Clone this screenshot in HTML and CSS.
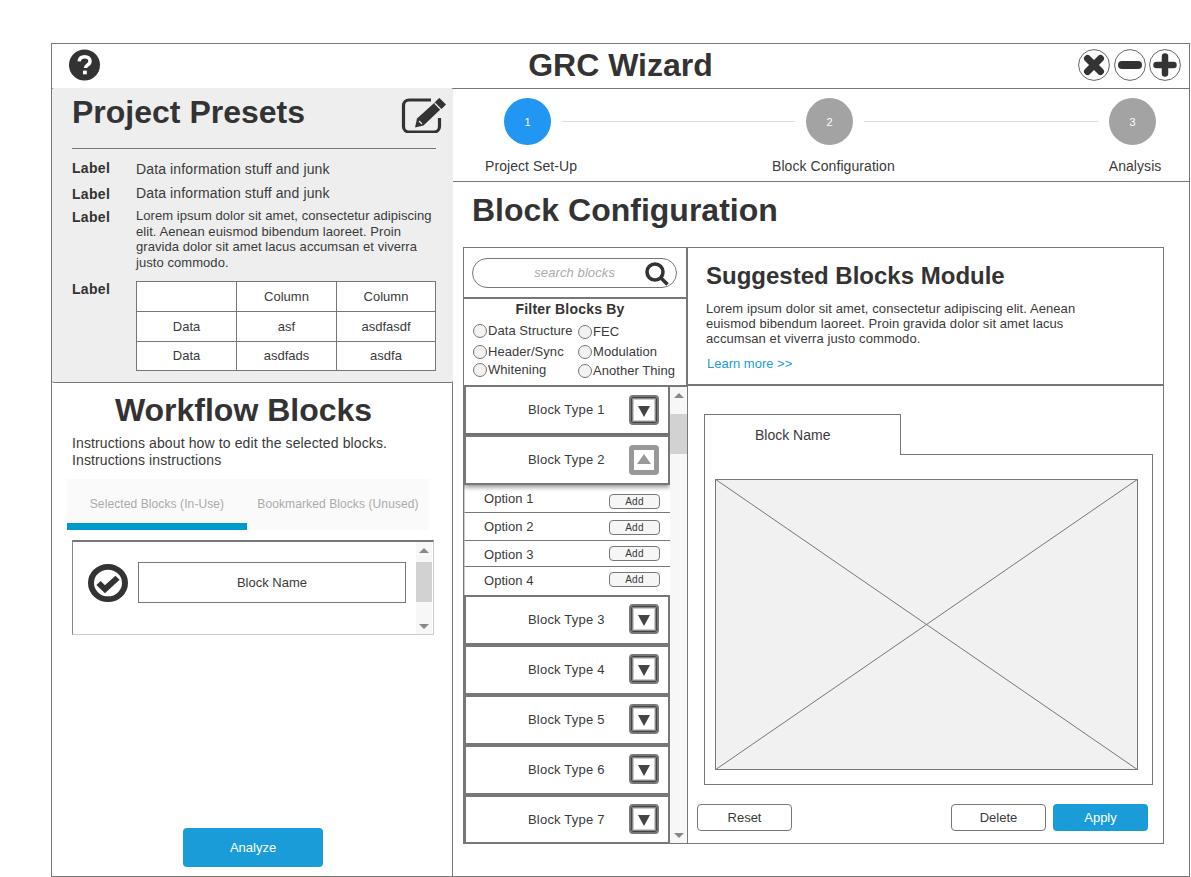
FILE: index.html
```html
<!DOCTYPE html>
<html lang="en">
<head>
<meta charset="utf-8">
<title>GRC Wizard</title>
<link rel="stylesheet" href="styles.css">
</head>
<body>
<div class="app">
  <header class="titlebar">
    <svg class="help" viewBox="0 0 32 32"><circle cx="16" cy="16" r="16" fill="#333"/><path d="M10.500 12.200c.3-3 2.600-4.700 5.700-4.700 3.200 0 5.500 1.800 5.500 4.500 0 2-1.200 3.100-2.700 4.100-1.300.9-1.900 1.500-1.900 3" fill="none" stroke="#fff" stroke-width="3.600"/><rect x="14.400" y="21.800" width="4" height="3.800" fill="#fff"/></svg>
    <h1 class="app-title">GRC Wizard</h1>
    <div class="win-btns">
      <svg class="win" viewBox="0 0 32 32"><circle cx="16" cy="16" r="15.400" fill="#fff" stroke="#666"/><path d="M9.500 9.500l13 13M22.500 9.500l-13 13" stroke="#333" stroke-width="7" stroke-linecap="round"/></svg>
      <svg class="win" viewBox="0 0 32 32"><circle cx="16" cy="16" r="15.400" fill="#fff" stroke="#666"/><path d="M8 16h16" stroke="#333" stroke-width="8" stroke-linecap="round"/></svg>
      <svg class="win" viewBox="0 0 32 32"><circle cx="16" cy="16" r="15.400" fill="#fff" stroke="#666"/><path d="M7.500 16h17M16 7.500v17" stroke="#333" stroke-width="6.500" stroke-linecap="round"/></svg>
    </div>
  </header>
  <div class="main">
    <aside class="left">
      <section class="presets">
        <div class="presets-head">
          <h2 class="presets-title">Project Presets</h2>
          <svg class="edit" viewBox="0 0 46 36"><path d="M30 3H8a5.500 5.500 0 0 0-5.500 5.500v21A5.500 5.500 0 0 0 8 35h25a5.500 5.500 0 0 0 5.500-5.500V21" fill="none" stroke="#333" stroke-width="3.200"/><path d="M16 21.500L36.500 3l6 6.500L22.500 28.500l-8.500 2z" fill="#333"/><path d="M34 5.500l2.500-3 2-1.500 6.500 6.500-2 2-2.500 2.500z" fill="#333"/><path d="M33.800 6.200l6.600 6.800" stroke="#eee" stroke-width="1.300"/><path d="M18 24l3 3" stroke="#eee" stroke-width="1.300"/></svg>
        </div>
        <div class="prop one"><b class="prop-label">Label</b><span class="prop-value">Data information stuff and junk</span></div>
        <div class="prop two"><b class="prop-label">Label</b><span class="prop-value">Data information stuff and junk</span></div>
        <div class="prop three"><b class="prop-label">Label</b><p class="prop-text">Lorem ipsum dolor sit amet, consectetur adipiscing elit. Aenean euismod bibendum laoreet. Proin gravida dolor sit amet lacus accumsan et viverra justo commodo.</p></div>
        <div class="prop four"><b class="prop-label">Label</b>
          <table class="data">
            <tr><td></td><td>Column</td><td>Column</td></tr>
            <tr><td>Data</td><td>asf</td><td>asdfasdf</td></tr>
            <tr><td>Data</td><td>asdfads</td><td>asdfa</td></tr>
          </table>
        </div>
      </section>
      <section class="workflow">
        <h2 class="workflow-title">Workflow Blocks</h2>
        <p class="workflow-text">Instructions about how to edit the selected blocks.<br>Instructions instructions</p>
        <div class="tabs">
          <div class="tab active">Selected Blocks (In-Use)</div>
          <div class="tab">Bookmarked Blocks (Unused)</div>
        </div>
        <div class="selected">
          <div class="selected-row">
            <svg class="check" viewBox="0 0 40 40" preserveAspectRatio="none"><circle cx="20" cy="20" r="17" fill="#fff" stroke="#333" stroke-width="6"/><path d="M10.500 20l6.500 6.500 12.500-12" fill="none" stroke="#333" stroke-width="6"/></svg>
            <div class="block-name">Block Name</div>
          </div>
          <div class="scrollbar">
            <i class="arrow-up"></i>
            <i class="thumb"></i>
            <i class="arrow-down"></i>
          </div>
        </div>
        <div class="analyze-wrap"><button class="btn primary analyze">Analyze</button></div>
      </section>
    </aside>
    <main class="right">
      <div class="steps">
        <div class="track">
          <span class="dot current">1</span><span class="connector"></span>
          <span class="dot">2</span><span class="connector"></span>
          <span class="dot">3</span>
        </div>
        <div class="step-labels">
          <span class="s1">Project Set-Up</span>
          <span class="s2">Block Configuration</span>
          <span class="s3">Analysis</span>
        </div>
      </div>
      <h2 class="page-title">Block Configuration</h2>
      <div class="config">
        <div class="sidebar">
          <div class="search-box">
            <div class="search">
              <span class="search-text">search blocks</span>
              <svg class="search-icon" viewBox="0 0 24 24"><circle cx="10" cy="10" r="8" fill="none" stroke="#333" stroke-width="3.600"/><path d="M15.500 15.500l7 7" stroke="#333" stroke-width="3.600"/></svg>
            </div>
          </div>
          <div class="filter">
            <h3 class="filter-title">Filter Blocks By</h3>
            <div class="filter-cols">
              <div class="filter-col">
                <label class="radio"><i></i>Data Structure</label>
                <label class="radio"><i></i>Header/Sync</label>
                <label class="radio"><i></i>Whitening</label>
              </div>
              <div class="filter-col second">
                <label class="radio"><i></i>FEC</label>
                <label class="radio"><i></i>Modulation</label>
                <label class="radio"><i></i>Another Thing</label>
              </div>
            </div>
          </div>
          <div class="list">
            <div class="items">
              <div class="item"><span>Block Type 1</span><i class="toggle"></i></div>
              <div class="item open"><span>Block Type 2</span><i class="toggle"></i></div>
              <div class="option"><span>Option 1</span><button class="add">Add</button></div>
              <div class="option"><span>Option 2</span><button class="add">Add</button></div>
              <div class="option"><span>Option 3</span><button class="add">Add</button></div>
              <div class="option"><span>Option 4</span><button class="add">Add</button></div>
              <div class="item"><span>Block Type 3</span><i class="toggle"></i></div>
              <div class="item"><span>Block Type 4</span><i class="toggle"></i></div>
              <div class="item"><span>Block Type 5</span><i class="toggle"></i></div>
              <div class="item"><span>Block Type 6</span><i class="toggle"></i></div>
              <div class="item"><span>Block Type 7</span><i class="toggle"></i></div>
            </div>
            <div class="scrollbar tall">
              <i class="arrow-up"></i>
              <i class="thumb"></i>
              <i class="arrow-down"></i>
            </div>
          </div>
        </div>
        <div class="content">
          <div class="suggest">
            <h2 class="suggest-title">Suggested Blocks Module</h2>
            <p class="suggest-text">Lorem ipsum dolor sit amet, consectetur adipiscing elit. Aenean euismod bibendum laoreet. Proin gravida dolor sit amet lacus accumsan et viverra justo commodo.</p>
            <a class="learn">Learn more &gt;&gt;</a>
          </div>
          <div class="editor">
            <div class="tab-head"><div class="tab-label">Block Name</div></div>
            <div class="tab-body">
              <svg class="placeholder" viewBox="0 0 423 291" preserveAspectRatio="none"><rect x=".5" y=".5" width="422" height="290" fill="#f1f1f1" stroke="#777"/><path d="M0 0L423 291M423 0L0 291" stroke="#777"/></svg>
            </div>
            <div class="actions">
              <button class="btn">Reset</button>
              <span class="spacer"></span>
              <button class="btn">Delete</button>
              <button class="btn primary">Apply</button>
            </div>
          </div>
        </div>
      </div>
    </main>
  </div>
</div>
</body>
</html>
```
FILE: styles.css
```css
* { box-sizing: border-box; }
html, body { margin: 0; padding: 0; height: 877px; overflow: hidden; background: #fff; }
body { font-family: "Liberation Sans", Arial, sans-serif; font-size: 14px; color: #3a3a3a; }
h1, h2, h3, p { margin: 0; }
h1, h2, h3, b { color: #333; }
i { display: block; font-style: normal; }

.app { margin: 43px 0 0 51px; width: 1139px; height: 834px; border: 1px solid #777; display: flex; flex-direction: column; }

.titlebar { height: 45px; flex: none; border-bottom: 1px solid #777; display: flex; align-items: center; justify-content: space-between; padding: 0 9px 2px 17px; position: relative; }
.help { width: 31px; height: 32px; }
.app-title { font-size: 32px; font-weight: bold; line-height: 40px; position: absolute; left: 0; right: 0; text-align: center; pointer-events: none; }
.win-btns { display: flex; gap: 4.500px; margin-right: -1px; }
.win { width: 32px; height: 32px; margin-left: -1px; }

.main { flex: 1; display: flex; min-height: 0; }

.left { width: 401px; flex: none; border-right: 1px solid #777; display: flex; flex-direction: column; }
.presets { height: 295px; flex: none; margin: -1px -1px 0 0; background: #eee; border-radius: 2px; padding: 0 17px 0 20px; border-bottom: 1px solid #777; position: relative; }
.presets-head { height: 61px; border-bottom: 1px solid #777; display: flex; justify-content: space-between; align-items: flex-start; }
.presets-title { font-size: 32px; line-height: 48px; }
.edit { width: 46px; height: 36px; margin: 9px -11px 0 0; }
.prop { display: flex; }
.prop-label { width: 64px; flex: none; letter-spacing: .3px; }
.prop-value { letter-spacing: .13px; }
.prop.one { margin-top: 12px; height: 24px; line-height: 17px; }
.prop.one .prop-label { margin-top: -1px; }
.prop.two { height: 23px; line-height: 17px; }
.prop.two .prop-label { margin-top: 1px; }
.prop.three { line-height: 17px; }
.prop.three .prop-label { margin-top: 1px; }
.prop-text { font-size: 13px; line-height: 15.670px; width: 300px; letter-spacing: .06px; }
.prop.four { margin-top: 8px; line-height: 17px; }
.prop.four .prop-label { margin-top: 2px; }
.data { flex: none; border-collapse: collapse; background: #fff; margin-top: 2px; }
.data td { width: 100px; height: 30px; border: 1px solid #777; text-align: center; font-size: 13px; padding: 0; }
.data td:last-child { width: 99px; }
.data tr:last-child td { height: 29px; }

.workflow { flex: 1; display: flex; flex-direction: column; padding: 0 0 9px 20px; }
.workflow-title { font-size: 32px; line-height: 40px; text-align: center; margin: 7px 18px 0 -19px; }
.workflow-text { line-height: 17px; margin-top: 5px; letter-spacing: .12px; }
.tabs { display: flex; width: 362px; height: 51px; margin: 10px 0 0 -5px; background: #fafafa; font-size: 12px; color: #aaa; letter-spacing: .1px; }
.tab { width: 180px; flex: none; text-align: center; padding: 18px 0 0 2px; line-height: 14px; white-space: nowrap; }
.tab.active { border-bottom: 7px solid #0099cc; padding-left: 0; }
.selected { width: 362px; height: 95px; margin-top: 10px; border: 1px solid #ccc; border-top: 2px solid #777; border-left-color: #888; display: flex; justify-content: space-between; }
.selected-row { display: flex; align-items: center; gap: 10px; padding: 19px 0 0 15px; height: 62px; }
.check { width: 40px; height: 38px; }
.block-name { width: 268px; height: 41px; border: 1px solid #777; display: flex; align-items: center; justify-content: center; font-size: 13px; }
.scrollbar { width: 16px; margin-right: 1px; background: #f7f7f7; display: flex; flex-direction: column; align-items: center; position: relative; }
.thumb { width: 16px; height: 40px; background: #d2d2d2; margin-top: 9px; }
.arrow-up { width: 0; height: 0; margin-top: 6px; border: 5px solid transparent; border-top: 0; border-bottom: 5px solid #888; }
.arrow-down { width: 0; height: 0; margin-top: auto; margin-bottom: 5px; border: 5px solid transparent; border-bottom: 0; border-top: 5px solid #888; }
.analyze-wrap { margin-top: auto; padding-left: 111px; }
.btn { width: 95px; height: 27px; border: 1px solid #777; border-radius: 4px; background: #fff; color: #3a3a3a; font: 13px "Liberation Sans", Arial, sans-serif; padding: 0; }
.btn.primary { border: 0; background: #1a9cd8; color: #fff; }
.btn.analyze { width: 140px; height: 39px; background: #1a9cd8; }

.right { flex: 1; min-width: 0; display: flex; flex-direction: column; }
.steps { height: 93px; flex: none; border-bottom: 1px solid #777; padding-top: 9px; }
.track { display: flex; align-items: center; padding: 0 33px 0 51px; }
.dot { width: 47px; height: 47px; flex: none; border-radius: 50%; background: #a3a3a3; color: #fff; font-size: 11px; display: flex; align-items: center; justify-content: center; }
.dot.current { background: #2196f3; }
.connector { flex: 1; height: 1px; background: #ddd; margin: 0 11px; }
.connector:nth-child(2) { flex: none; width: 233px; }
.step-labels { display: flex; margin-top: 13px; line-height: 17px; letter-spacing: .07px; }
.s1 { margin-left: 32px; }
.s2 { margin-left: 195px; }
.s3 { margin-left: 214px; }
.page-title { height: 65px; flex: none; padding-left: 19px; font-size: 32px; line-height: 56px; }

.config { margin-left: 10px; width: 701px; height: 597px; display: flex; border: 1px solid #777; flex: none; }
.sidebar { width: 224px; flex: none; display: flex; flex-direction: column; }
.search-box { height: 51px; border-bottom: 2px solid #777; padding: 10px 0 0 8px; flex: none; }
.search { width: 205px; height: 30px; border: 1px solid #777; border-radius: 15px; display: flex; align-items: center; justify-content: flex-end; padding-right: 7px; }
.search-text { font-size: 13px; font-style: italic; color: #aaa; margin: 0 30px 2px 0; letter-spacing: .1px; }
.search-icon { width: 24px; height: 24px; margin: 0 0 -1px 0; }
.filter { height: 86px; flex: none; padding: 2px 0 0 9px; font-size: 13px; }
.filter-title { font-size: 14px; line-height: 17px; text-align: center; margin-left: -9px; padding-right: 12px; letter-spacing: .2px; }
.filter-cols { display: flex; margin-top: 3px; }
.filter-col { width: 105px; }
.filter-col.second { margin-top: 1px; }
.radio { display: flex; align-items: center; height: 19px; gap: 1px; white-space: nowrap; letter-spacing: .05px; }
.radio:nth-child(2) { margin-top: 2px; }
.radio:nth-child(3) { margin-top: -1px; }
.filter-col.second .radio:nth-child(2) { margin-top: 1px; }
.filter-col.second .radio:nth-child(3) { margin-top: 0; }
.radio i { width: 14px; height: 14px; border: 1px solid #777; border-radius: 50%; background: #f2f2f2; }

.list { flex: 1; min-height: 0; display: flex; border-top: 2px solid #777; overflow: hidden; }
.items { width: 206px; flex: none; }
.item { height: 50px; border: 2px solid #777; display: flex; align-items: center; justify-content: space-between; padding-left: 62px; padding-right: 9px; background: #fff; position: relative; }
.item span { font-size: 13px; letter-spacing: .2px; margin-top: -1px; }
.option ~ .item span { margin-top: -2px; }
.item:nth-child(1) { height: 48px; border-top: 0; }
.item:last-child { height: 49px; padding-top: 1px; }
.option ~ .item .toggle { margin-top: -2px; }
.item.open { box-shadow: 0 2px 5px rgba(0,0,0,.45); }
.toggle { width: 30px; height: 30px; border: 2px solid #777; border-radius: 4px; box-shadow: inset 0 0 0 1px #444, inset 0 0 0 2px #888, inset 0 0 0 3px #ccc; background: #fff; display: flex; align-items: center; justify-content: center; position: relative; }
.toggle::after { content: ""; display: block; margin-top: 2px; border-left: 6px solid transparent; border-right: 6px solid transparent; border-top: 11px solid #444; }
.open .toggle { border: 5px solid #999; box-shadow: none; }
.open .toggle::after { margin: -2px 0 0; border-left-width: 7px; border-right-width: 7px; border-top: 0; border-bottom: 10px solid #999; }
.option { height: 28px; border-bottom: 1px solid #777; border-left: 1px solid #ccc; display: flex; align-items: flex-start; justify-content: space-between; padding: 6px 10px 0 19px; font-size: 13px; line-height: 16px; letter-spacing: .05px; }
.option:nth-child(3) .add { margin-top: 3px; }
.option:nth-child(4) .add { margin-top: 1px; }
.option:nth-child(5) { height: 26px; }
.option:nth-child(5) .add { margin-top: -1px; }
.option:nth-child(6) { border-bottom: 0; }
.option:nth-child(6) .add { margin-top: -1px; }
.add { width: 51px; height: 15px; border: 1px solid #777; border-radius: 4px; background: #f6f6f6; color: #3a3a3a; font: 10px "Liberation Sans", Arial, sans-serif; padding: 0; letter-spacing: .3px; }
.scrollbar.tall { margin-right: 0; width: 17px; flex: none; }
.scrollbar.tall .thumb { width: 17px; margin-top: 16px; }

.content { flex: 1; display: flex; flex-direction: column; border-left: 2px solid #777; margin-left: -2px; min-width: 0; }
.suggest { height: 138px; flex: none; border-bottom: 2px solid #777; padding: 13px 0 0 18px; }
.suggest-title { font-size: 24px; line-height: 30px; }
.suggest-text { font-size: 13px; line-height: 15px; width: 380px; margin-top: 10px; letter-spacing: .08px; }
.learn { display: block; font-size: 13px; color: #1a9cd8; margin: 10px 0 0 1px; line-height: 16px; }
.editor { flex: 1; padding: 28px 10px 0 9px; display: flex; flex-direction: column; min-height: 0; }
.tab-head { height: 41px; flex: none; padding-left: 7px; margin-bottom: -1px; position: relative; z-index: 1; }
.tab-label { width: 197px; height: 41px; border: 1px solid #777; border-bottom: 0; background: #fff; padding: 12px 0 0 50px; font-size: 14px; line-height: 16px; }
.tab-body { margin-left: 7px; width: 449px; height: 331px; border: 1px solid #777; padding: 24px 14px 14px 10px; flex: none; }
.placeholder { display: block; width: 423px; height: 291px; }
.actions { display: flex; align-items: flex-start; margin-top: 19px; gap: 7px; }
.spacer { width: 145px; }
```
